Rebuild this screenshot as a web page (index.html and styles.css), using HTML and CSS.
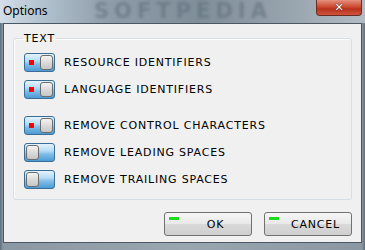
FILE: index.html
```html
<!DOCTYPE html>
<html lang="en">
<head>
  <meta charset="UTF-8">
  <title>Options</title>
  <link rel="stylesheet" href="styles.css">
</head>
<body>
  <div class="window">
    <div class="titlebar">
      <span class="title">Options</span>
      <span class="watermark">SOFTPEDIA</span>
      <button class="close">&#x2715;</button>
    </div>

    <div class="client">
      <fieldset class="group">
        <legend>TEXT</legend>

        <div class="row">
          <span class="toggle on"><span class="dot"></span><span class="knob"></span></span>
          <span class="label">RESOURCE IDENTIFIERS</span>
        </div>
        <div class="row">
          <span class="toggle on"><span class="dot"></span><span class="knob"></span></span>
          <span class="label">LANGUAGE IDENTIFIERS</span>
        </div>
        <div class="row spaced">
          <span class="toggle on"><span class="dot"></span><span class="knob"></span></span>
          <span class="label">REMOVE CONTROL CHARACTERS</span>
        </div>
        <div class="row">
          <span class="toggle"><span class="knob"></span></span>
          <span class="label">REMOVE LEADING SPACES</span>
        </div>
        <div class="row">
          <span class="toggle"><span class="knob"></span></span>
          <span class="label">REMOVE TRAILING SPACES</span>
        </div>
      </fieldset>

      <div class="buttons">
        <button class="btn"><span class="led"></span>OK</button>
        <button class="btn"><span class="led"></span>CANCEL</button>
      </div>
    </div>
  </div>
</body>
</html>
```

FILE: styles.css
```css
body {
  margin: 0;
  background: #8e9ca8;
}

.window {
  width: 365px;
  height: 250px;
  display: flex;
  flex-direction: column;
  background: linear-gradient(90deg, #5d6d7b 0, #8a98a4 3px, #9aa6b0 50%, #8a98a4 362px, #5d6d7b 365px);
  overflow: hidden;
}

.titlebar {
  position: relative;
  height: 23px;
  display: flex;
  justify-content: space-between;
  align-items: flex-start;
  background: linear-gradient(90deg, #d3dee8 0, #b4c3d0 40px, #8d9ca8 110px, #7f8e99 200px, #98a4ae 290px, #b3bcc4 365px);
  overflow: hidden;
}

.title {
  font-family: "Noto Sans", sans-serif;
  font-size: 12px;
  line-height: 16px;
  color: #000;
  margin: 3px 0 0 3px;
  position: relative;
  z-index: 1;
}

.watermark {
  position: absolute;
  left: 94px;
  top: 0;
  font-family: "DejaVu Sans", sans-serif;
  font-weight: bold;
  font-size: 21px;
  line-height: 22px;
  letter-spacing: 5px;
  color: #5b6b77;
  opacity: 0.55;
  filter: blur(1.4px);
}

.close {
  position: relative;
  width: 46px;
  height: 16px;
  margin-right: 3px;
  padding: 0;
  border: 1px solid #6b2a22;
  border-top: none;
  border-radius: 0 0 4px 4px;
  background: linear-gradient(#e3917e, #cc4a33 45%, #b8321e 60%, #d0553c);
  color: #fff;
  font-family: "DejaVu Sans", sans-serif;
  font-weight: bold;
  font-size: 11px;
  line-height: 14px;
  text-shadow: 0 0 1px #3a1a14, 0 0 1px #3a1a14;
}

.client {
  flex: 1;
  margin: 0 3px 7px 3px;
  background: #f0f0f0;
  border: 1px solid #4b5863;
  display: flex;
  flex-direction: column;
}

.group {
  margin: 8px 9px 0 9px;
  padding: 8px 0 10px 9px;
  border: 1px solid #d5dfe5;
  border-radius: 3px;
  box-shadow: inset 1px 1px 0 #fff;
  font-family: "DejaVu Sans", sans-serif;
  font-size: 11px;
  letter-spacing: 0.8px;
  color: #000;
}

.group legend {
  padding: 0 1px;
  line-height: 13px;
}

.row {
  display: flex;
  align-items: center;
  height: 19px;
  margin-top: 8px;
  margin-left: 1px;
}

.row:first-of-type {
  margin-top: 0;
}

.row.spaced {
  margin-top: 17px;
}

.toggle {
  position: relative;
  box-sizing: border-box;
  width: 31px;
  height: 19px;
  border: 1px solid #3a6e98;
  border-radius: 3px;
  background: linear-gradient(#e4f3fc, #b7dcf4 40%, #7fbde8 60%, #4d9ad3);
  display: flex;
  align-items: center;
  padding: 0 1px;
}

.toggle.on {
  justify-content: flex-end;
}

.knob {
  box-sizing: border-box;
  width: 13px;
  height: 15px;
  border: 1px solid #6c6c6c;
  border-radius: 3px;
  background: linear-gradient(#f4f4f4, #d6d6d6 60%, #c6c6c6);
}

.dot {
  position: absolute;
  left: 4px;
  top: 6px;
  width: 5px;
  height: 5px;
  background: #ff0000;
}

.label {
  margin-left: 9px;
  line-height: 19px;
}

.buttons {
  display: flex;
  justify-content: flex-end;
  gap: 12px;
  margin: 12px 9px 0 0;
}

.btn {
  position: relative;
  box-sizing: border-box;
  width: 88px;
  height: 24px;
  padding: 0 0 0 15px;
  border: 1px solid #707070;
  border-radius: 3px;
  background: linear-gradient(#f6f6f6, #e8e8e8 50%, #d9d9d9 52%, #cfcfcf);
  font-family: "DejaVu Sans", sans-serif;
  font-size: 11px;
  letter-spacing: 0.8px;
  color: #000;
}

.led {
  position: absolute;
  left: 4px;
  top: 4px;
  width: 10px;
  height: 3px;
  background: #1bdc1b;
}
```
